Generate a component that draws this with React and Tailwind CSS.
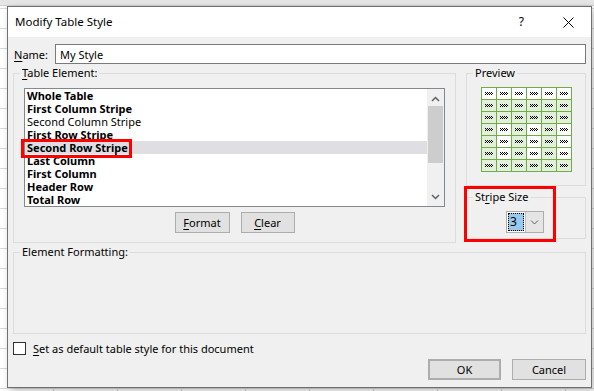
import React from 'react';

const font = { fontFamily: '"Noto Sans", "Open Sans", sans-serif' };

const items = [
  { label: 'Whole Table', bold: true },
  { label: 'First Column Stripe', bold: true },
  { label: 'Second Column Stripe', bold: false },
  { label: 'First Row Stripe', bold: true },
  { label: 'Second Row Stripe', bold: true, selected: true },
  { label: 'Last Column', bold: true },
  { label: 'First Column', bold: true },
  { label: 'Header Row', bold: true },
  { label: 'Total Row', bold: true },
];

// preview fill: 1 = green, 0 = white
const previewRows = [
  [0, 0, 0, 0, 0, 0],
  [1, 1, 1, 1, 1, 1],
  [1, 1, 1, 1, 1, 1],
  [1, 0, 1, 0, 1, 0],
  [1, 0, 1, 0, 1, 0],
  [1, 0, 1, 0, 1, 0],
  [1, 1, 1, 1, 1, 1],
];

// tiny checker pattern drawn in the preview cells
const Squiggle = () => (
  <svg width="8" height="3" viewBox="0 0 8 3" shapeRendering="crispEdges">
    {[0, 2, 4, 6].map((x) => (
      <rect key={`a${x}`} x={x} y="0" width="1" height="1" fill="#000" />
    ))}
    {[1, 3, 5, 7].map((x) => (
      <rect key={`b${x}`} x={x} y="1" width="1" height="1" fill="#000" />
    ))}
    {[0, 2, 4, 6].map((x) => (
      <rect key={`c${x}`} x={x} y="2" width="1" height="1" fill="#000" />
    ))}
  </svg>
);

const Button = ({ children, className = '' }) => (
  <button className={`flex items-center justify-center h-[21px] bg-[#e1e1e1] border border-[#adadad] text-[11px] leading-none text-black ${className}`}>
    {children}
  </button>
);

export default function App() {
  return (
    <div
      style={font}
      className="w-[594px] h-[391px] overflow-hidden flex flex-col bg-white bg-[linear-gradient(#d9d9d9_1px,transparent_1px),linear-gradient(90deg,#d9d9d9_1px,transparent_1px)] bg-size-[64px_20px] bg-position-[53px_8px] text-black"
    >
      <div className="h-[6px] w-full bg-[#e6e6e6] border-b border-[#d0d0d0] shrink-0" />
      <div className="pl-[7px]">
        <div className="w-[585px] h-[382px] border border-[#707070] bg-[#f0f0f0] flex flex-col shadow-[3px_3px_8px_rgba(0,0,0,0.25)]">
          {/* title bar */}
          <div className="h-[30px] bg-white flex items-center pl-[7px] shrink-0">
            <span className="text-[11.5px] leading-none">Modify Table Style</span>
            <span className="ml-auto text-[12px] leading-none mr-[39px]">?</span>
            <svg width="11" height="11" viewBox="0 0 11 11" className="mr-[17px]">
              <path d="M0.5 0.5L10.5 10.5M10.5 0.5L0.5 10.5" stroke="#000" strokeWidth="1" />
            </svg>
          </div>

          <div className="px-[5px] flex flex-col flex-1">
            {/* name row */}
            <div className="flex items-center mt-[7px] h-[20px]">
              <span className="w-[42px] pl-[1px] text-[11px] leading-none">
                <span className="underline underline-offset-2">N</span>ame:
              </span>
              <div className="flex-1 h-[20px] bg-white border border-[#7a7a7a] flex items-center pl-[4px] text-[11px] leading-none">
                My Style
              </div>
            </div>

            {/* main row */}
            <div className="flex mt-[1px]">
              <fieldset className="w-[443px] border border-[#dcdcdc]">
                <legend className="ml-[6px] px-[2px] text-[11px] leading-[16px]">
                  <span className="underline underline-offset-2">T</span>able Element:
                </legend>
                <div className="px-[10px] mt-[7px] pb-[9px] flex flex-col">
                  <div className="relative h-[119px] bg-white border border-[#828790] flex">
                    <div className="flex-1 flex flex-col">
                      {items.map((it) => (
                        <div
                          key={it.label}
                          className={`h-[13px] flex items-center pl-[2px] text-[11px] leading-[13px] ${it.bold ? 'font-bold' : ''} ${it.selected ? 'bg-[#dfdfe3]' : ''}`}
                        >
                          {it.label}
                        </div>
                      ))}
                    </div>
                    <div className="w-[17px] bg-[#f0f0f0] flex flex-col items-center">
                      <svg width="9" height="6" viewBox="0 0 9 6" className="mt-[7px]">
                        <path d="M1 5L4.5 1.5L8 5" stroke="#606060" strokeWidth="1.5" fill="none" />
                      </svg>
                      <div className="w-[15px] h-[57px] bg-[#cdcdcd] mt-[4px]" />
                      <svg width="9" height="6" viewBox="0 0 9 6" className="mt-auto mb-[6px]">
                        <path d="M1 1L4.5 4.5L8 1" stroke="#606060" strokeWidth="1.5" fill="none" />
                      </svg>
                    </div>
                    <div className="absolute left-[-4px] top-[50px] w-[111px] h-[19px] border-[3px] border-[#ff0000]" />
                  </div>
                  <div className="flex justify-center gap-[11px] mt-[5px]">
                    <Button className="w-[55px]">
                      <span className="underline underline-offset-2">F</span>ormat
                    </Button>
                    <Button className="w-[54px]">
                      <span className="underline underline-offset-2">C</span>lear
                    </Button>
                  </div>
                </div>
              </fieldset>

              <div className="relative ml-[10px] w-[120px] flex flex-col">
                <fieldset className="border border-[#dcdcdc]">
                  <legend className="ml-[6px] px-[2px] text-[11px] leading-[16px]">Preview</legend>
                  <div className="flex justify-center mt-[6px] pb-[13px]">
                    <div className="grid grid-cols-6 gap-px p-px bg-[#70ad47]">
                      {previewRows.flatMap((row, r) =>
                        row.map((g, c) => (
                          <div
                            key={`${r}-${c}`}
                            className={`w-[14px] h-[11px] flex items-center justify-center ${g ? 'bg-[#e2efda]' : 'bg-white'}`}
                          >
                            <Squiggle />
                          </div>
                        ))
                      )}
                    </div>
                  </div>
                </fieldset>
                <fieldset className="border border-[#dcdcdc] mt-[3px]">
                  <legend className="ml-[6px] px-[2px] text-[11px] leading-[16px]">
                    St<span className="underline underline-offset-2">r</span>ipe Size
                  </legend>
                  <div className="mt-[6px] pb-[5px] pl-[39px]">
                    <div className="w-[38px] h-[22px] border border-[#adadad] bg-white flex">
                      <div className="m-[1px] w-[16px] bg-[#99c9ef] border border-dotted border-black flex items-center pl-[1px] text-[12px] leading-none">
                        3
                      </div>
                      <div className="flex-1 bg-[#e5e5e5] border-l border-[#c0c0c0] flex items-center justify-center">
                        <svg width="9" height="6" viewBox="0 0 9 6">
                          <path d="M1 1.5L4.5 5L8 1.5" stroke="#606060" strokeWidth="1" fill="none" />
                        </svg>
                      </div>
                    </div>
                  </div>
                </fieldset>
                <div className="absolute left-[-2px] top-[121px] w-[92px] h-[56px] border-[3px] border-[#ff0000]" />
              </div>
            </div>

            {/* element formatting */}
            <fieldset className="border border-[#dcdcdc] mt-[1px]">
              <legend className="ml-[6px] px-[2px] text-[11px] leading-[16px]">Element Formatting:</legend>
              <div className="h-[73px]" />
            </fieldset>

            {/* checkbox */}
            <div className="flex items-center gap-[7px] mt-[8px] h-[13px]">
              <div className="w-[13px] h-[13px] bg-white border border-[#333333]" />
              <span className="text-[11px] leading-none">
                <span className="underline underline-offset-2">S</span>et as default table style for this document
              </span>
            </div>

            {/* action buttons */}
            <div className="flex justify-end gap-[11px] mt-[4px]">
              <Button className="w-[73px] h-[20px] border-2 border-[#0078d7]">OK</Button>
              <Button className="w-[74px] h-[20px]">Cancel</Button>
            </div>
          </div>
        </div>
      </div>
    </div>
  );
}
